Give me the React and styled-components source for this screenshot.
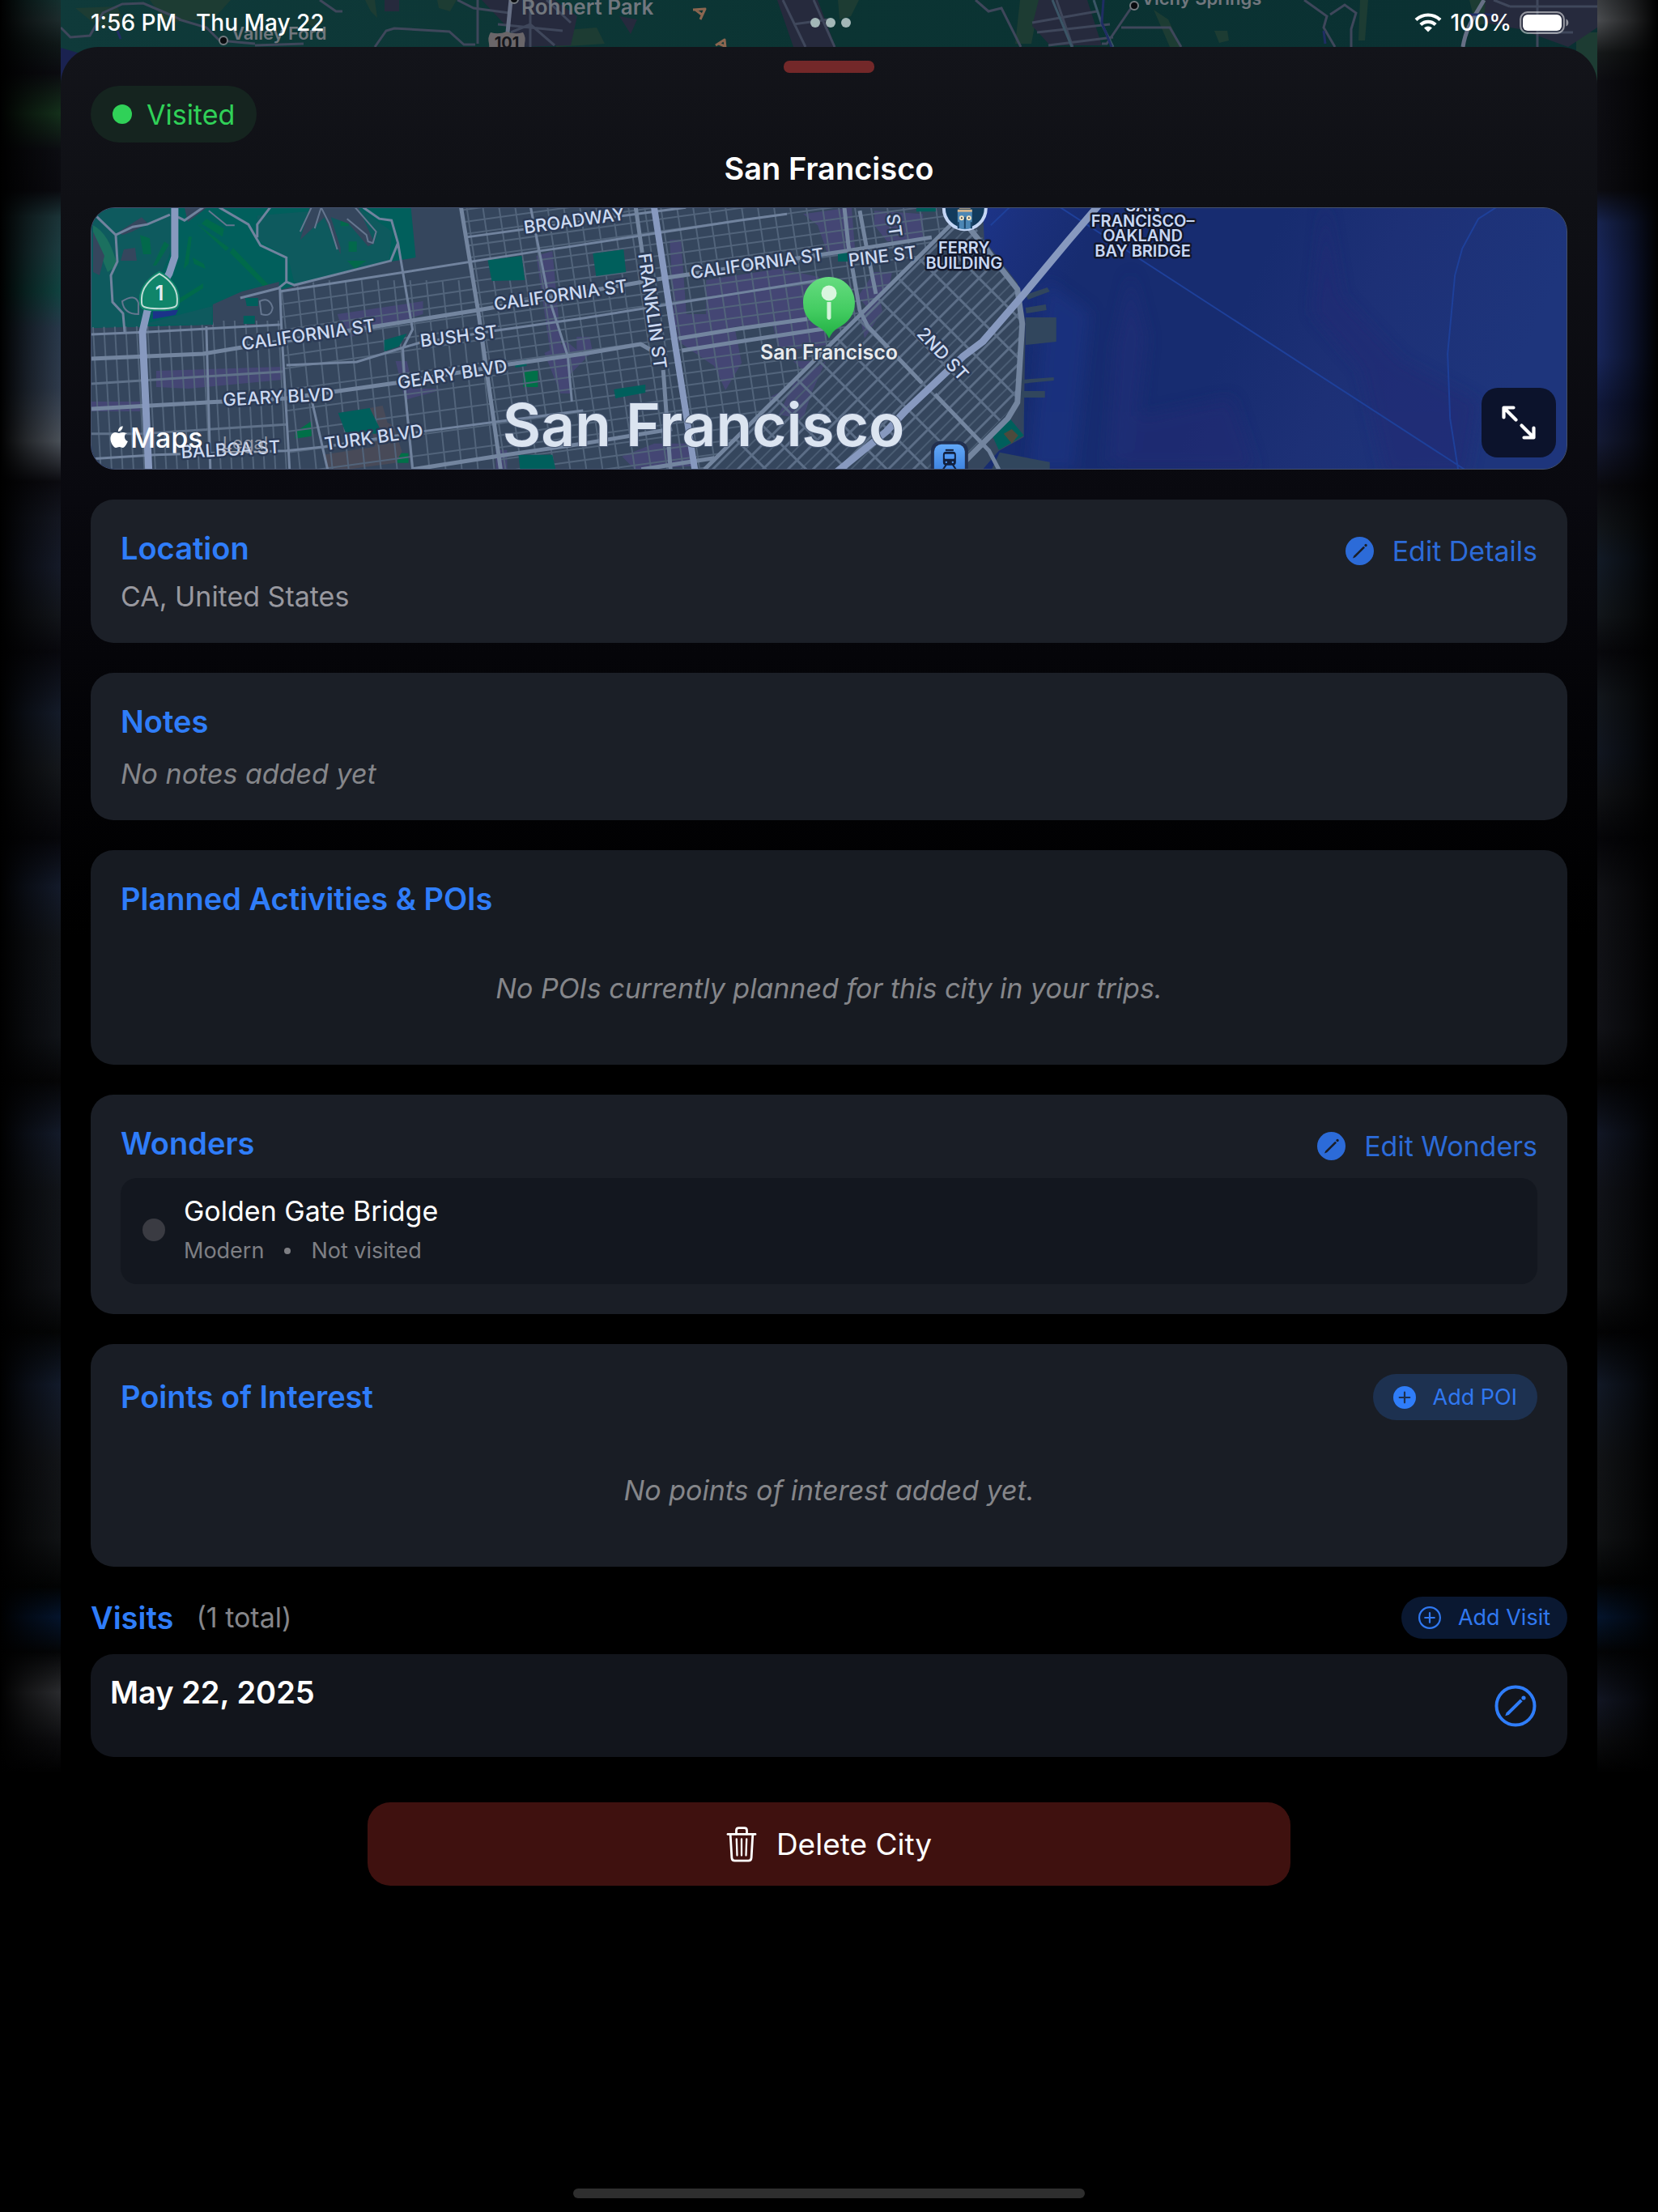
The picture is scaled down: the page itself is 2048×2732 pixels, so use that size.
import React from "react";
import styled, { createGlobalStyle } from "styled-components";

const GlobalStyle = createGlobalStyle`
  *, *::before, *::after { box-sizing: border-box; }
  html, body { margin: 0; background: #000; }
  body {
    font-family: Inter, "Liberation Sans", sans-serif;
    font-size: 34px;
    color: #fff;
    -webkit-font-smoothing: antialiased;
  }
  button { font: inherit; color: inherit; border: 0; padding: 0; background: none; cursor: pointer; }
  h1, h2, h3, p { margin: 0; }
`;

/* ---------- page frame ---------- */

const Page = styled.div`
  display: grid;
  grid-template-columns: 75px minmax(0, 1fr) 75px;
  min-height: 100vh;
  background: #000;
`;

const LEFT_GLOW = `#14302f 0, #1d2b2c 25px, #0f1818 55px, #0b0b10 90px, #14301b 140px,
  #0c0d12 185px, #0a0a0f 235px, #1b3438 268px, #1c3c40 310px, #104340 360px,
  #28384a 405px, #2f3b4c 480px, #4a5058 545px, #0b0b10 595px, #131620 640px,
  #151a28 700px, #12151a 760px, #08080d 805px, #141b29 880px, #14171b 950px,
  #06060a 1035px, #131a2a 1095px, #111419 1160px, #101318 1280px, #050506 1335px,
  #131a29 1400px, #111419 1470px, #101216 1590px, #040505 1645px, #121a2a 1710px,
  #121418 1800px, #101214 1900px, #020303 1960px, #04142c 1997px, #040506 2040px,
  #2a2b2e 2090px, #0c0c0e 2150px, #000 2190px`;

const RIGHT_GLOW = `#3a3d40 0, #4a4c4f 25px, #16191a 65px, #0d0d12 100px, #0c0c11 235px,
  #172450 275px, #18265c 330px, #18265a 440px, #10183a 500px, #141a34 545px,
  #0a0a0f 600px, #111519 650px, #121a26 690px, #12161a 760px, #08080c 805px,
  #12161b 860px, #111620 930px, #101215 980px, #050508 1035px, #101115 1100px,
  #111217 1270px, #040405 1335px, #111624 1400px, #101218 1470px, #0f1114 1590px,
  #030304 1645px, #111825 1710px, #111316 1800px, #101214 1900px, #020303 1955px,
  #04142c 1997px, #030405 2040px, #111522 2100px, #0a0b0d 2150px, #000 2190px`;

const SideGlow = styled.div`
  background:
    linear-gradient(${(p) => (p.$side === "left" ? "to left" : "to right")}, transparent, rgba(0, 0, 0, 0.5) 55%, #000),
    linear-gradient(to bottom, ${(p) => (p.$side === "left" ? LEFT_GLOW : RIGHT_GLOW)});
`;

const Screen = styled.div`
  position: relative;
  isolation: isolate;
  display: flex;
  flex-direction: column;
`;

const MapBackdrop = styled.svg`
  position: absolute;
  inset: 0 0 auto 0;
  width: 100%;
  height: 110px;
  z-index: -1;
`;

/* ---------- status bar ---------- */

const StatusBar = styled.header`
  display: grid;
  grid-template-columns: 1fr auto 1fr;
  align-items: center;
  height: 58px;
  padding: 0 34px 2px 37px;
  font-size: 28px;
  line-height: 34px;
  font-weight: 500;
`;

const StatusTime = styled.div`
  display: flex;
  gap: 24px;
`;

const StatusDots = styled.div`
  display: flex;
  gap: 7px;
`;

const StatusDot = styled.span`
  width: 12px;
  height: 12px;
  border-radius: 50%;
  background: #a3b7b7;
`;

const StatusRight = styled.div`
  display: flex;
  align-items: center;
  justify-content: flex-end;
  gap: 10px;
`;

/* ---------- sheet ---------- */

const Sheet = styled.main`
  flex: 1;
  display: flex;
  flex-direction: column;
  padding: 17px 37px;
  border-radius: 46px 46px 0 0;
  background: linear-gradient(to bottom, #13141a 0, #0f1015 190px, #09090f 560px, #030306 850px, #000 1100px);
`;

const Handle = styled.div`
  align-self: center;
  width: 112px;
  height: 15px;
  border-radius: 7px;
  background: #732829;
`;

const VisitedPill = styled.div`
  align-self: flex-start;
  display: flex;
  align-items: center;
  gap: 18px;
  height: 70px;
  margin-top: 16px;
  padding: 0 27px;
  border-radius: 35px;
  background: #15241f;
  color: #30d158;
`;

const Dot = styled.span`
  flex: none;
  width: ${(p) => p.$size}px;
  height: ${(p) => p.$size}px;
  border-radius: 50%;
  background: ${(p) => p.$color};
`;

const Title = styled.h1`
  margin: 10px 0 26px;
  font-size: 38px;
  line-height: 44px;
  font-weight: 600;
  text-align: center;
`;

/* ---------- map card ---------- */

const MapCard = styled.section`
  position: relative;
  height: 324px;
  border: 1px solid #44506c;
  border-radius: 30px;
  overflow: hidden;
  background: #172c70;
`;

const MapDrawing = styled.svg`
  display: block;
  width: 100%;
  height: 100%;
`;

const Attribution = styled.div`
  position: absolute;
  left: 22px;
  bottom: 12px;
  display: flex;
  align-items: baseline;
  gap: 24px;
  line-height: 40px;
`;

const MapsBrand = styled.span`
  display: flex;
  align-items: center;
  gap: 2px;
  font-weight: 500;
`;

const LegalLink = styled.a`
  font-size: 22px;
  color: rgba(178, 180, 190, 0.75);
  text-decoration: underline;
`;

const ExpandButton = styled.button`
  position: absolute;
  right: 13px;
  bottom: 14px;
  display: grid;
  place-items: center;
  width: 92px;
  height: 86px;
  border-radius: 20px;
  background: #0c132c;
`;

/* ---------- cards ---------- */

const Stack = styled.div`
  display: flex;
  flex-direction: column;
  gap: 37px;
  margin-top: 37px;
`;

const Card = styled.section`
  padding: 37px;
  border-radius: 28px;
  background: ${(p) => p.$tone};
`;

const CardHeader = styled.div`
  display: flex;
  align-items: ${(p) => p.$align || "flex-start"};
  justify-content: space-between;
`;

const Heading = styled.h2`
  font-size: 38px;
  line-height: 47px;
  font-weight: 600;
  color: #2f7df9;
`;

const Body = styled.p`
  margin-top: ${(p) => p.$gap}px;
  line-height: 40px;
  color: #98989f;
`;

const Hint = styled(Body)`
  font-style: italic;
  color: #85868a;
`;

const EmptyState = styled(Hint)`
  padding: 46px 0 37px;
  text-align: center;
`;

const LinkButton = styled.button`
  display: flex;
  align-items: center;
  gap: 23px;
  height: 52px;
  color: #2c6bd8;
`;

const PillButton = styled.button`
  display: flex;
  align-items: center;
  gap: 21px;
  height: ${(p) => p.$height}px;
  padding: 0 ${(p) => p.$pad}px;
  border-radius: 29px;
  background: ${(p) => p.$tone};
  font-size: 27px;
  line-height: 34px;
  color: #3078f0;
`;

const Wonder = styled.article`
  display: flex;
  align-items: center;
  gap: 23px;
  margin-top: 14px;
  padding: 21px 27px 24px;
  border-radius: 20px;
  background: #13171f;
`;

const WonderText = styled.div`
  display: flex;
  flex-direction: column;
  gap: 12px;
`;

const WonderName = styled.h3`
  font-size: 34px;
  line-height: 40px;
  font-weight: 400;
`;

const WonderMeta = styled.p`
  display: flex;
  align-items: center;
  gap: 25px;
  font-size: 27px;
  line-height: 34px;
  color: #7e7f84;
`;

const VisitsHeader = styled.div`
  display: flex;
  align-items: center;
  margin-top: 37px;
`;

const VisitsCount = styled.span`
  margin: 0 auto 0 28px;
  line-height: 40px;
  color: #85868a;
`;

const VisitRow = styled.article`
  display: flex;
  align-items: center;
  justify-content: space-between;
  height: 127px;
  margin-top: 19px;
  padding: 24px 38px 24px 24px;
  border-radius: 28px;
  background: #12151c;
`;

const VisitDate = styled.h3`
  align-self: flex-start;
  font-size: 38px;
  line-height: 47px;
  font-weight: 600;
`;

const IconButton = styled.button`
  display: grid;
  place-items: center;
  color: #2f7df9;
`;

const DeleteButton = styled.button`
  align-self: center;
  display: flex;
  align-items: center;
  justify-content: center;
  gap: 24px;
  width: 62.5%;
  height: 103px;
  margin-top: 56px;
  border-radius: 28px;
  background: #3f110f;
  font-size: 37px;
  line-height: 47px;
`;

const HomeIndicator = styled.div`
  align-self: center;
  width: 632px;
  max-width: 60%;
  height: 12px;
  margin-top: auto;
  border-radius: 6px;
  background: #2e2e2e;
`;

/* ---------- icons ---------- */

const PencilSolid = () => (
  <svg width="35" height="35" viewBox="0 0 36 36" aria-hidden="true">
    <circle cx="18" cy="18" r="18" fill="currentColor" />
    <path d="M10.600 24.100 22.800 12l1.900 1.900L12.500 26l-3.300 1.300z" fill="#1a1e27" />
    <circle cx="25.800" cy="10.800" r="1.700" fill="#1a1e27" />
  </svg>
);

const PencilCircle = () => (
  <svg width="52" height="52" viewBox="0 0 52 52" aria-hidden="true">
    <circle cx="26" cy="26" r="23.500" fill="none" stroke="currentColor" strokeWidth="4" />
    <path d="M14.800 34.200 31.800 17.400l2.900 2.900L17.700 37l-4.500 1.300z" fill="currentColor" />
    <circle cx="36" cy="16" r="2.600" fill="currentColor" />
  </svg>
);

const PlusSolid = () => (
  <svg width="28" height="28" viewBox="0 0 28 28" aria-hidden="true">
    <circle cx="14" cy="14" r="14" fill="#2f7df9" />
    <path d="M14 7.700v12.600M7.700 14h12.600" stroke="#1d3150" strokeWidth="2.200" strokeLinecap="round" />
  </svg>
);

const PlusCircle = () => (
  <svg width="28" height="28" viewBox="0 0 28 28" aria-hidden="true">
    <circle cx="14" cy="14" r="12.900" fill="none" stroke="currentColor" strokeWidth="2.200" />
    <path d="M14 8.200v11.600M8.200 14h11.600" stroke="currentColor" strokeWidth="2.200" strokeLinecap="round" />
  </svg>
);

const Trash = () => (
  <svg width="38" height="44" viewBox="0 0 38 44" fill="none" stroke="currentColor" strokeWidth="2.800" strokeLinecap="round" strokeLinejoin="round" aria-hidden="true">
    <path d="M2 9.400h34" />
    <path d="M12.500 9V4.600q0-3 3-3h7q3 0 3 3V9" />
    <path d="m5.200 10 1.700 28.600q.3 3.600 3.800 3.600h16.600q3.500 0 3.800-3.600L32.800 10" />
    <path d="m12.800 15.500.7 20M19 15.500v20M25.200 15.500l-.7 20" strokeWidth="2.300" />
  </svg>
);

const Expand = () => (
  <svg width="44" height="44" viewBox="0 0 44 44" fill="none" stroke="#fff" strokeWidth="4.200" strokeLinecap="round" strokeLinejoin="round" aria-hidden="true">
    <path d="M3.500 15.500v-12h12M4 4l14.500 14.500" />
    <path d="M40.500 28.500v12h-12M40 40 25.500 25.500" />
  </svg>
);

const Wifi = () => (
  <svg width="34" height="24" viewBox="0 0 34 24" fill="none" stroke="#fff" strokeWidth="4.200" aria-hidden="true">
    <path d="M2 8.600a21.500 21.500 0 0 1 30 0" />
    <path d="M7.800 14.600a13.200 13.200 0 0 1 18.400 0" />
    <path d="m17 23.500-5-5a7.200 7.200 0 0 1 10 0z" fill="#fff" stroke="none" />
  </svg>
);

const Battery = () => (
  <svg width="62" height="28" viewBox="0 0 62 28" aria-hidden="true">
    <rect x="1.200" y="1.200" width="53.600" height="25.600" rx="8.500" fill="none" stroke="#fff" strokeOpacity=".5" strokeWidth="2.200" />
    <rect x="4" y="4" width="48" height="20" rx="6" fill="#fff" />
    <path d="M57.500 9.500c3.800 1.600 3.800 7.400 0 9z" fill="#fff" fillOpacity=".5" />
  </svg>
);

const AppleMark = () => (
  <svg width="24" height="29" viewBox="0 0 24 29" fill="#fff" aria-hidden="true">
    <path d="M16.600.2c.2 1.700-.5 3.400-1.500 4.600-1.100 1.300-2.700 2.200-4.200 2.100-.2-1.700.6-3.400 1.500-4.500C13.500 1.200 15.200.3 16.600.2z" />
    <path d="M21.900 9.900c-1.800 1.100-3 2.700-3 5 0 2.600 1.600 4.600 4 5.500-.6 1.800-1.500 3.500-2.600 5.100-1 1.500-2.100 3-3.800 3-1.600 0-2.100-1-4.100-1s-2.600 1-4.200 1c-1.700.1-2.900-1.600-4-3.100C2 22.200.3 16.700 2.400 12.600c1.100-2 3-3.300 5.100-3.300 1.800 0 3.300 1.100 4.500 1.100 1.100 0 3-1.300 5.200-1.100 1.800.1 3.500.7 4.700 1.900z" transform="translate(0 -1.400)" />
  </svg>
);

/* ---------- backdrop map ---------- */

const Backdrop = () => (
  <MapBackdrop viewBox="0 0 1898 110" preserveAspectRatio="xMidYMin slice" aria-hidden="true">
    <defs>
      <linearGradient id="hills" x1="0" x2="1">
        <stop offset="0" stopColor="#0f3a3a" />
        <stop offset=".5" stopColor="#0b3433" />
        <stop offset="1" stopColor="#0a3032" />
      </linearGradient>
    </defs>
    <rect width="1898" height="110" fill="url(#hills)" />
    <path d="M0 59 24 66 0 100z" fill="#1a2250" />
    <g fill="#1d3c33">
      <path d="M18 10 70 8l10 24-30 4zM110 0h100l-20 22-60 6zM376 0h12l3 22-8-8zM465 0h24l-8 14-14-4zM612 38l50-4 10 20-60 4zM300 24l20 0-4 14z" />
      <path d="M960 0h26l-10 20-14 4zM1185 0h24l-10 54h-20zM1605 0h10l-4 50h-8zM1425 38l16 0 2 12-12 3zM1350 12l18 12 16 34h-14z" />
      <path d="M1740 0h40l-8 26-24 6zM1872 40h26v70h-26z" />
    </g>
    <g fill="#262a3d">
      <path d="M400 0h18v14h-18zM520 0h90l28 20-8 36-62 2-16-24zM885 0h50l22 58h-52zM1208 0h60l18 56h-64l-22-24zM1760 0h138v34l-36 24-60-22-44-8zM690 20l22 4-8 18z" />
    </g>
    <g fill="none" stroke="#3f475b" strokeWidth="3">
      <path d="M0 34 12 46 36 44 52 16 76 5 102 4 130 16 148 24M146 24 180 34 196 50M196 50 240 54M240 56l60-2M388 58l14-20 10-3 68 4 18 16h14M515 0v54M320 0l20 14 8 0" />
      <path d="M490 0l20 10 44 6M1130 0l16 14 16-4 24 48M1536 0l28 20-4 14 14 24M1568 18l18-12 14 10-6 20 0 22" />
      <path d="M556 40l24-10 30 26M580 0v58M540 30l80 8M600 0l30 28M1200 28l80-14M1206 40l90-10M1220 56l80-10M1230 0l20 58M1322 10l-30 44h-6M1310 34l60 0 14 24" />
      <path d="M1790 8l108 0M1824 0v58M1824 40h44M1770 0l20 8M892 0l28 58M930 0l26 58M905 30l44-6" />
      <path d="M1758 0c-10 18-22 32-26 58" stroke="#666f85" strokeWidth="5" />
      <path d="M556 0l-4 40" stroke="#666f85" strokeWidth="5" />
      <path d="M1225 0l24 58M1276 0l10 30 14 28" stroke="#3b5566" />
    </g>
    <g stroke="#1f2d63" strokeWidth="3" fill="none">
      <path d="M70 38l4 10M1288 0l-2 28 12 30M1560 38l2 16M1740 18h30" />
    </g>
    <g fontFamily="Inter, sans-serif" fontWeight="600" fill="#71777e">
      <text x="569" y="18" fontSize="26">Rohnert Park</text>
      <text x="211" y="49" fontSize="22">Valley Ford</text>
      <text x="1335" y="6" fontSize="22">Vichy Springs</text>
    </g>
    <g fill="#090b0f" stroke="#757b80" strokeWidth="2">
      <circle cx="201" cy="50" r="5" />
      <circle cx="1326" cy="7" r="5" />
      <circle cx="560" cy="-1" r="5" />
    </g>
    <path d="M531 40q10 3 20-1 10 4 20 1 4 6 2 14-1 8 2 12h-48q3-6 2-12-2-8 2-14z" fill="#6a6669" />
    <text x="551" y="60" fontFamily="Inter, sans-serif" fontSize="20" fontWeight="700" textAnchor="middle" fill="#15171c">101</text>
    <g fill="none" stroke="#8b6650" strokeWidth="3" strokeLinejoin="round">
      <path d="M781 12 796 11 790 24M784 12l9 7M809 56l11-7 1 10M813 54l7 3" />
    </g>
  </MapBackdrop>
);

/* ---------- city map ---------- */

const range = (n) => Array.from({ length: n }, (_, i) => i);

const LABELS = [
  { text: "BROADWAY", x: 597, y: 16, turn: -8 },
  { text: "CALIFORNIA ST", x: 268, y: 157, turn: -8 },
  { text: "CALIFORNIA ST", x: 580, y: 108, turn: -8 },
  { text: "CALIFORNIA ST", x: 823, y: 69, turn: -8 },
  { text: "PINE ST", x: 978, y: 60, turn: -7 },
  { text: "BUSH ST", x: 454, y: 159, turn: -7 },
  { text: "GEARY BLVD", x: 231, y: 234, turn: -3 },
  { text: "GEARY BLVD", x: 446, y: 206, turn: -9 },
  { text: "TURK BLVD", x: 349, y: 284, turn: -8 },
  { text: "BALBOA ST", x: 172, y: 299, turn: -3 },
  { text: "FRANKLIN ST", x: 694, y: 128, turn: 82 },
  { text: "ST", x: 993, y: 22, turn: 82 },
  { text: "2ND ST", x: 1053, y: 181, turn: 47 },
];

const CityMap = () => (
  <MapDrawing viewBox="0 0 1824 324" preserveAspectRatio="xMidYMid slice" role="img" aria-label="Map of San Francisco">
    <defs>
      <linearGradient id="bay" x1="0" x2="1" y1="0" y2=".2">
        <stop offset="0" stopColor="#1c3488" />
        <stop offset=".08" stopColor="#1b307c" />
        <stop offset=".2" stopColor="#172c70" />
        <stop offset=".5" stopColor="#172c70" />
        <stop offset=".7" stopColor="#1d3076" />
        <stop offset="1" stopColor="#1e357c" />
      </linearGradient>
      <linearGradient id="pin" x1="0" x2="0" y1="0" y2="1">
        <stop offset="0" stopColor="#66dc80" />
        <stop offset=".55" stopColor="#43cc61" />
        <stop offset="1" stopColor="#1fae41" />
      </linearGradient>
      <linearGradient id="station" x1="0" x2="0" y1="0" y2="1">
        <stop offset="0" stopColor="#62a8f8" />
        <stop offset="1" stopColor="#2f74d8" />
      </linearGradient>
      <filter id="soft" x="-30%" y="-30%" width="160%" height="160%">
        <feGaussianBlur stdDeviation="9" />
      </filter>
      <clipPath id="west"><path d="M0 148 150 145 156 122 231 98 235 151 245 324H0z" /></clipPath>
      <clipPath id="mid"><path d="M233 104 253 98 372 68 401 60 395 0H457L506 324H245L235 151z" /></clipPath>
      <clipPath id="north"><path d="M457 0H1080L1062 22 758 324H506z" /></clipPath>
      <clipPath id="soma"><path d="M758 324 1082 8 1145 101 1151 144 1145 241 1082 307 1070 324z" /></clipPath>
    </defs>

    <rect width="1824" height="324" fill="#35465d" />
    <path d="M1102 0 1104 40 1145 94 1155 141 1153 261V284L1122 301 1102 324H1824V0z" fill="url(#bay)" />
    <g filter="url(#soft)" opacity=".6">
      <path d="M1525-10 1545 110 1620 190 1715 240 1700 330H1600L1570 200 1510 130z" fill="#222a74" />
      <path d="M1270 324 1290 260 1410 235 1440 324z" fill="#222b73" />
      <path d="M1285 80 1305 160 1290 300 1255 324 1265 170z" fill="#202f78" />
      <path d="M1180 90 1235 130 1215 324H1160z" fill="#1d3585" />
    </g>
    <g fill="none" stroke="#1e409a" strokeWidth="2">
      <path d="M1198 0 1698 324M1737 0 1715 14 1695 51 1686 84 1677 181 1680 261 1690 324M1112 22 1135 0" />
    </g>
    <g fill="#31465d">
      <path d="M1155 108 1182 99 1185 104 1158 114zM1155 124 1180 120 1181 127 1156 131zM1155 136h38v30l-38 4zM1150 213l40-3v4l-40 4zM1150 227h29v8h-29zM1123 303l62 12v9h-72z" />
    </g>

    <path d="M0 0H395L401 62 370 67 251 97 155 124 150 145 0 149z" fill="#015f5c" />
    <path d="M0 0H100V50L66 130 60 148H0zM205 10 330 0 372 30 368 66 251 94 243 62 205 40zM100 135 150 122 148 145H62z" fill="#0e5a5e" />
    <g fill="#006d46" opacity=".8">
      <path d="M60 34l12 4 2 20-10 0zM120 36l4 0-4 34-6 6zM142 14l22 12-2 10-26-16zM175 50l50 52-4 4-50-50zM125 62l14 8 2 6-14-6zM100 118l38-24 0 6-38 24zM90 42l-14 30 4 0 16-26zM130 20l40 30-4 4zM308 8h10v15h-10zM318 42h10v13h-10zM316 66l24 0-14 10z" />
    </g>
    <path d="M2 22q20 10 30 50l-12 8L2 36z" fill="#1b705f" />
    <g fill="#35465d">
      <path d="M34 30 62 12 70 20 50 30 38 34zM40 52 54 50 56 66 36 66zM2 30 16 60 10 84 2 80zM115 0h28l-24 18zM258 40 270 0h60l20 44-8 4-24-28-22-8 12 38 0 8-20-46zM150 120l36-16 46-12v46l-82 6z" />
    </g>
    <g fill="#007048">
      <path d="M252 278 272 264V283L252 286zM300 308l14-4 0 20h-14zM378 304h14v12h-14zM534 202h18v20h-18z" />
    </g>
    <path d="M344 248 360 245 366 266 374 270 384 302 376 316 316 324H292L286 306 350 296z" fill="#484a58" />
    <path d="M1128 280l10-6 8 8-8 10z" fill="#4c4a3c" />
    <g fill="#474778" opacity=".85">
      <path d="M80 202 236 197V213L120 224 80 222zM0 240H60v12H0zM304 132 410 116V132L314 162zM376 190h14l8 34 40 0-50 14zM550 60l20-6 12 130-14 0zM560 180l28-14 24 20-20 20 0 24-12 0zM715 40h14l8 110h-16zM722 132h70l12 60-20 34-14-30-44-30zM760 90l90-14 50 10 10 84-60 8-8-36-82 10zM880 8l60-8 4 50-32 12-14-40zM968 4l60 4 0 30-44 4-16-20zM948 110l20-30 22 0-4 20-22 30zM868 190h46l-26 20zM836 236l40-20 24 34-40 0zM656 308l40-16 44 0 4 28-72 4zM600 160h16l4 20-20 12zM500 300h14v24h-14z" />
    </g>

    <g clipPath="url(#west)" stroke="#52647b" strokeWidth="2">
      {range(20).map((i) => <path key={i} d={`M${i * 13.5 - 12} 140 ${i * 13.5 - 2} 324`} />)}
      <path d="M0 280H60L245 268M0 218 236 203" stroke="#5f7189" strokeWidth="3" fill="none" />
    </g>
    <g clipPath="url(#mid)" stroke="#52647b" strokeWidth="2">
      {range(18).map((i) => <path key={i} d={`M${i * 20 + 214} 90 ${i * 20 + 238} 324`} />)}
      {range(6).map((i) => <path key={i} d={`M233 ${i * 16 + 120} 480 ${i * 16 + 84}`} />)}
      {range(5).map((i) => <path key={i} d={`M236 ${i * 26 + 226} 500 ${i * 26 + 190}`} />)}
    </g>
    <g clipPath="url(#north)" stroke="#52647b" strokeWidth="2">
      {range(36).map((i) => <path key={i} d={`M${i * 20 + 444} 0 ${i * 20 + 492} 324`} />)}
      {range(30).map((i) => <path key={i} d={`M395 ${i * 15 + 12} 1090 ${i * 15 - 84}`} />)}
    </g>
    <g fill="#005f5c">
      <path d="M490 65 532 60 536 90 495 91zM305 254 344 248 356 272 352 280 314 278zM362 164 390 156 380 172 362 178zM188 134h14v10h-14zM190 112h16v10l-14 0zM620 57 658 52 661 80 624 85zM646 225 685 219V229L648 236zM528 306h42l4 18h-44zM923 55h12v12h-12zM1020 0h24v5h-24zM524 192l14-4v8l-14 2z" />
    </g>
    <g clipPath="url(#soma)">
      <path d="M758 324 1082 8 1145 101 1151 144 1145 241 1082 307 1070 324z" fill="#35465d" />
      <path d="M868 218 908 190 890 230 880 262 850 256zM950 134l24-26 4 20-22 34z" fill="#474778" opacity=".8" />
      <g stroke="#4b5d74" strokeWidth="2">
        {range(12).map((i) => <path key={i} d={`M${i * 31 + 778} 330 ${i * 31 + 1086} 22`} />)}
      </g>
      <g stroke="#5c6e87" strokeWidth="3">
        {range(10).map((i) => <path key={i} d={`M${i * 31 + 762} 330 ${i * 31 + 1070} 22`} />)}
        {range(13).map((i) => <path key={i} d={`M${i * 30 + 740} ${230 - i * 20} ${i * 30 + 950} ${440 - i * 20}`} />)}
      </g>
    </g>
    <path d="M1112 278 1134 259 1153 282 1122 300z" fill="#005f5c" />
    <path d="M1128 280l10-6 8 8-8 10z" fill="#4c4a3c" />

    <g fill="none" stroke="#71839e" strokeWidth="3">
      <path d="M6 11 30 34 32 67 24 84 26 117 39 131 41 154M30 34 51 24 69 21 97 9M107 12 115 16 138 0M184 112 231 100 241 92V62L209 47 194 21 158 0M241 92 251 96 370 66 379 44 371 16 356 14 336 0M205 37V21L221 0" />
      <path d="M258 30 272 0M276 26 284 0 294 20 304 52M326 0 352 30 348 44 342 42 340 34 316 14M145 4l22 18 10 0M38 116q16-10 20 2v14q-18 0-20-16zM208 116q12-6 16 8-2 12-14 8z" stroke="#65768f" strokeWidth="2" />
      <path d="M0 157 70 154 233 145M233 104 553 54 588 49 801 16 860 8M462 37 608 17 735 0M0 311 79 306 241 301 288 296 409 277 608 251M241 195 328 191 383 174 407 167 502 152 608 137 900 90" />
      <path d="M233 100 235 151 245 324M142 147 147 324M379 44 397 151 385 174 388 230 397 324M543 0 565 110 589 184 594 240M273 241 292 324" />
    </g>
    <g fill="none" stroke="#73859f" strokeWidth="5" strokeLinejoin="round">
      <path d="M0 187 138 181 186 173 352 147 478 127 711 87 932 54 1039 37M457 0 478 127 506 324" />
      <path d="M0 249 162 240 241 236 376 217 516 194 608 181 679 169 693 177 M730 177 800 166 905 150M726 162 800 150 885 138" />
      <path d="M397 324 506 307 608 292 718 274M673 0 681 56M707 201 716 324M680 324 770 310" />
      <path d="M931 0 936 47 950 127 960 147 1027 217M950 4 958 47 970 107M1043 231 1110 301 1122 324M758 324 1062 22" />
      <path d="M1082 21 1145 101 1151 144 1145 241 1133 261 1070 324" strokeWidth="7" />
    </g>
    <g fill="none" stroke="#8799bf" strokeLinejoin="round">
      <path d="M103-5V61L96 82 69 128 63 154 71 330" strokeWidth="9" />
      <path d="M695-5 722 171 747 330" strokeWidth="8" />
      <path d="M1250-8 1208 41 1153 107 1102 166 1078 184 1007 251 983 277 918 330" strokeWidth="9" />
    </g>
    <path d="M76 127h31l-3 6-28 5z" fill="#1b3389" />

    <path d="M84 81C95 87 107 99 107 113c0 7 0 9-3 11-8 3-32 3-40 0-3-2-3-4-3-11 0-14 12-26 23-32z" fill="#10856a" stroke="#10856a" strokeWidth="4" />
    <path d="M84 82C95 88 106 99 106 113c0 7 0 8-3 10-8 3-30 3-38 0-3-2-3-3-3-10 0-14 11-25 22-31z" fill="none" stroke="#bfdcd6" strokeWidth="2" />
    <text x="84" y="115" fontFamily="Inter, sans-serif" fontSize="25" fontWeight="600" textAnchor="middle" fill="#e4edf0">1</text>

    <g fontFamily="Inter, sans-serif" textAnchor="middle" strokeLinejoin="round" paintOrder="stroke">
      <g fontSize="22" fontWeight="500" fill="#cddaf2" stroke="#2b3a55" strokeWidth="5">
        {LABELS.map((l) => (
          <text key={`${l.text}${l.x}`} transform={`translate(${l.x} ${l.y}) rotate(${l.turn})`} y="8">{l.text}</text>
        ))}
      </g>
      <g fontSize="20" fontWeight="600" fill="#c9d8f4" stroke="#12182c" strokeWidth="5">
        <text x="1079" y="57">FERRY</text>
        <text x="1079" y="76">BUILDING</text>
        <text x="1300" y="5">SAN</text>
        <text x="1300" y="24">FRANCISCO–</text>
        <text x="1300" y="42">OAKLAND</text>
        <text x="1300" y="61">BAY BRIDGE</text>
      </g>
      <text x="757" y="295" fontSize="73" fontWeight="600" fill="#dbe4f0" stroke="#4a5a76" strokeWidth="2">San Francisco</text>
      <text x="912" y="188" fontSize="25" fontWeight="600" fill="#e8ebee" stroke="#35465d" strokeWidth="4">San Francisco</text>
    </g>

    <circle cx="1080" cy="1" r="26" fill="#123a5c" stroke="#c4d6f5" strokeWidth="4" />
    <path d="M1071 25V4h18v21q-9 4-18 0z" fill="#4c86b4" />
    <path d="M1071 4h18M1073 0h14" stroke="#d3b58e" strokeWidth="3" />
    <path d="M1080 12v14M1072 18v8M1088 18v8" stroke="#1b4468" strokeWidth="2" />
    <circle cx="1076" cy="13" r="3" fill="#f2e2c0" />
    <circle cx="1085" cy="13" r="3" fill="#f2e2c0" />
    <circle cx="1076" cy="13" r="1" fill="#26384a" />
    <circle cx="1085" cy="13" r="1" fill="#26384a" />

    <rect x="1038" y="289" width="46" height="50" rx="12" fill="#22304f" />
    <rect x="1042" y="293" width="38" height="44" rx="9" fill="url(#station)" />
    <path d="M1056 300h10" stroke="#111f3d" strokeWidth="2" />
    <rect x="1053" y="302" width="16" height="17" rx="4" fill="#111f3d" />
    <path d="M1057 318l-4 6M1065 318l4 6" stroke="#111f3d" strokeWidth="2" />
    <rect x="1055" y="305" width="12" height="6" rx="1" fill="#4f97f2" />
    <circle cx="1057" cy="315" r="1.200" fill="#4f97f2" />
    <circle cx="1065" cy="315" r="1.200" fill="#4f97f2" />

    <path d="M912 86c18 0 32 14 32 32 0 15-9 25-21 31-5 3-8 7-11 13-3-6-6-10-11-13-12-6-21-16-21-31 0-18 14-32 32-32z" fill="url(#pin)" />
    <path d="M909.500 117h5v20q-2.500 4-5 0z" fill="#d2f3d9" />
    <circle cx="912" cy="106" r="9.500" fill="#d9f6df" />
  </MapDrawing>
);

/* ---------- app ---------- */

export default function App() {
  return (
    <>
      <GlobalStyle />
      <Page>
        <SideGlow $side="left" />
        <Screen>
          <Backdrop />
          <StatusBar>
            <StatusTime>
              <span>1:56 PM</span>
              <span>Thu May 22</span>
            </StatusTime>
            <StatusDots>
              <StatusDot />
              <StatusDot />
              <StatusDot />
            </StatusDots>
            <StatusRight>
              <Wifi />
              <span>100%</span>
              <Battery />
            </StatusRight>
          </StatusBar>

          <Sheet>
            <Handle />
            <VisitedPill>
              <Dot $size={24} $color="#30d158" />
              Visited
            </VisitedPill>
            <Title>San Francisco</Title>

            <MapCard>
              <CityMap />
              <Attribution>
                <MapsBrand>
                  <AppleMark />
                  Maps
                </MapsBrand>
                <LegalLink href="#legal">Legal</LegalLink>
              </Attribution>
              <ExpandButton type="button" aria-label="Expand map">
                <Expand />
              </ExpandButton>
            </MapCard>

            <Stack>
              <Card $tone="#1c2028">
                <CardHeader>
                  <div>
                    <Heading>Location</Heading>
                    <Body $gap={16}>CA, United States</Body>
                  </div>
                  <LinkButton type="button">
                    <PencilSolid />
                    Edit Details
                  </LinkButton>
                </CardHeader>
              </Card>

              <Card $tone="#1b1f27">
                <Heading>Notes</Heading>
                <Hint $gap={21}>No notes added yet</Hint>
              </Card>

              <Card $tone="#171b22">
                <Heading>Planned Activities &amp; POIs</Heading>
                <EmptyState $gap={21}>No POIs currently planned for this city in your trips.</EmptyState>
              </Card>

              <Card $tone="#1a1e26">
                <CardHeader>
                  <Heading>Wonders</Heading>
                  <LinkButton type="button">
                    <PencilSolid />
                    Edit Wonders
                  </LinkButton>
                </CardHeader>
                <Wonder>
                  <Dot $size={28} $color="#3a3b42" />
                  <WonderText>
                    <WonderName>Golden Gate Bridge</WonderName>
                    <WonderMeta>
                      <span>Modern</span>
                      <Dot $size={8} $color="#7e7f84" />
                      <span>Not visited</span>
                    </WonderMeta>
                  </WonderText>
                </Wonder>
              </Card>

              <Card $tone="#191d25">
                <CardHeader $align="center">
                  <Heading>Points of Interest</Heading>
                  <PillButton type="button" $height={57} $pad={25} $tone="#1d3150">
                    <PlusSolid />
                    Add POI
                  </PillButton>
                </CardHeader>
                <EmptyState $gap={21}>No points of interest added yet.</EmptyState>
              </Card>
            </Stack>

            <VisitsHeader>
              <Heading>Visits</Heading>
              <VisitsCount>(1 total)</VisitsCount>
              <PillButton type="button" $height={52} $pad={21} $tone="#0a1831">
                <PlusCircle />
                Add Visit
              </PillButton>
            </VisitsHeader>

            <VisitRow>
              <VisitDate>May 22, 2025</VisitDate>
              <IconButton type="button" aria-label="Edit visit">
                <PencilCircle />
              </IconButton>
            </VisitRow>

            <DeleteButton type="button">
              <Trash />
              Delete City
            </DeleteButton>

            <HomeIndicator />
          </Sheet>
        </Screen>
        <SideGlow $side="right" />
      </Page>
    </>
  );
}
